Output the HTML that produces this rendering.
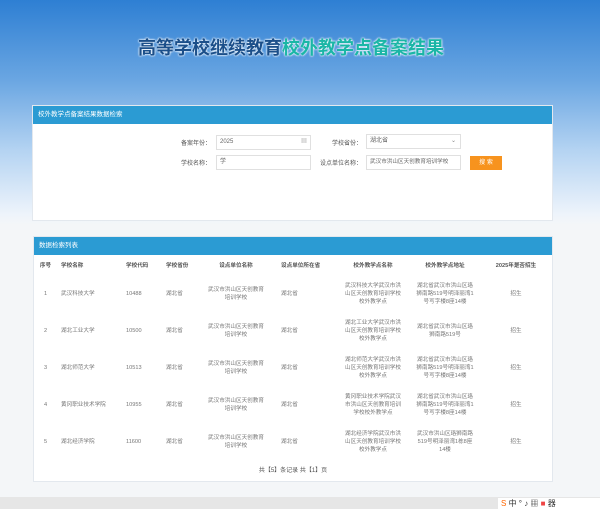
<!DOCTYPE html>
<html><head><meta charset="utf-8"><style>
*{margin:0;padding:0;box-sizing:border-box}
body{width:600px;height:509px;overflow:hidden;font-family:"Liberation Sans","Noto Sans CJK SC",sans-serif;color:#666;font-size:6px;position:relative;
background:linear-gradient(to bottom,#2e7fd3 0px,#6aa6e2 80px,#b4d3f2 150px,#eef4fb 215px,#f4f6f8 225px,#f4f6f8 100%)}
.a{position:absolute}
.title{left:138px;width:320px;top:34px;font-size:18px;font-weight:bold;color:#1b4f8a;white-space:nowrap;text-shadow:0 0 2px #fff,0 0 2px #fff}
.title span{color:#1bb6a6}
.panel{background:#fff;border:1px solid #e3e8ee}
.hd{position:absolute;left:0;right:0;top:0;height:18px;background:#2b9bd3;color:#fff;font-size:6.5px;line-height:18px;padding-left:5px}
.lbl{text-align:right;font-size:6px;color:#555;white-space:nowrap}
.inp{border:1px solid #e0e0e0;background:#fff;height:15px;line-height:13px;padding-left:3px;font-size:6px;color:#666}
.btn{background:#f7931e;color:#fff;text-align:center;line-height:14px;font-size:6px}
table{position:absolute;left:33px;top:256px;width:519px;border-collapse:collapse;table-layout:fixed}
td,th{font-size:5.6px;line-height:8px;text-align:center;color:#777;font-weight:normal;vertical-align:middle;overflow:hidden}
th{height:19px;color:#555;font-weight:bold;white-space:nowrap}
td{height:37px}
.l{text-align:left}
</style></head><body>
<div class="a title">高等学校继续教育<span>校外教学点备案结果</span></div>

<div class="a panel" style="left:32px;top:105px;width:521px;height:116px">
<div class="hd">校外教学点备案结果数据检索</div>
</div>
<div class="a lbl" style="left:160px;top:138px;width:51px">备案年份：</div>
<div class="a inp" style="left:216px;top:135px;width:95px">2025<span style="float:right;margin-right:3px;color:#aaa">▦</span></div>
<div class="a lbl" style="left:310px;top:138px;width:52px">学校省份：</div>
<div class="a inp" style="left:366px;top:134px;width:95px">湖北省<span style="float:right;margin-right:4px;color:#888">⌄</span></div>
<div class="a lbl" style="left:160px;top:158px;width:51px">学校名称：</div>
<div class="a inp" style="left:216px;top:155px;width:95px">学</div>
<div class="a lbl" style="left:300px;top:158px;width:62px">设点单位名称：</div>
<div class="a inp" style="left:366px;top:155px;width:95px;overflow:hidden;white-space:nowrap;font-size:5.6px">武汉市洪山区天创教育培训学校</div>
<div class="a btn" style="left:470px;top:156px;width:32px;height:14px">搜 索</div>

<div class="a panel" style="left:33px;top:236px;width:520px;height:246px">
<div class="hd">数据检索列表</div>
</div>
<table>
<colgroup><col style="width:25px"><col style="width:66px"><col style="width:39px"><col style="width:37px"><col style="width:72px"><col style="width:64px"><col style="width:74px"><col style="width:70px"><col></colgroup>
<tr><th>序号</th><th class="l" style="padding-left:3px">学校名称</th><th class="l" style="padding-left:2px">学校代码</th><th class="l" style="padding-left:3px">学校省份</th><th>设点单位名称</th><th class="l" style="padding-left:9px">设点单位所在省</th><th>校外教学点名称</th><th>校外教学点地址</th><th>2025年是否招生</th></tr>
<tr><td>1</td><td class="l" style="padding-left:3px">武汉科技大学</td><td class="l" style="padding-left:2px">10488</td><td class="l" style="padding-left:3px">湖北省</td><td>武汉市洪山区天创教育<br>培训学校</td><td class="l" style="padding-left:9px">湖北省</td><td>武汉科技大学武汉市洪<br>山区天创教育培训学校<br>校外教学点</td><td>湖北省武汉市洪山区珞<br>狮南路519号明泽丽湾1<br>号写字楼8座14楼</td><td>招生</td></tr>
<tr><td>2</td><td class="l" style="padding-left:3px">湖北工业大学</td><td class="l" style="padding-left:2px">10500</td><td class="l" style="padding-left:3px">湖北省</td><td>武汉市洪山区天创教育<br>培训学校</td><td class="l" style="padding-left:9px">湖北省</td><td>湖北工业大学武汉市洪<br>山区天创教育培训学校<br>校外教学点</td><td>湖北省武汉市洪山区珞<br>狮南路519号</td><td>招生</td></tr>
<tr><td>3</td><td class="l" style="padding-left:3px">湖北师范大学</td><td class="l" style="padding-left:2px">10513</td><td class="l" style="padding-left:3px">湖北省</td><td>武汉市洪山区天创教育<br>培训学校</td><td class="l" style="padding-left:9px">湖北省</td><td>湖北师范大学武汉市洪<br>山区天创教育培训学校<br>校外教学点</td><td>湖北省武汉市洪山区珞<br>狮南路519号明泽丽湾1<br>号写字楼8座14楼</td><td>招生</td></tr>
<tr><td>4</td><td class="l" style="padding-left:3px">黄冈职业技术学院</td><td class="l" style="padding-left:2px">10955</td><td class="l" style="padding-left:3px">湖北省</td><td>武汉市洪山区天创教育<br>培训学校</td><td class="l" style="padding-left:9px">湖北省</td><td>黄冈职业技术学院武汉<br>市洪山区天创教育培训<br>学校校外教学点</td><td>湖北省武汉市洪山区珞<br>狮南路519号明泽丽湾1<br>号写字楼8座14楼</td><td>招生</td></tr>
<tr><td>5</td><td class="l" style="padding-left:3px">湖北经济学院</td><td class="l" style="padding-left:2px">11600</td><td class="l" style="padding-left:3px">湖北省</td><td>武汉市洪山区天创教育<br>培训学校</td><td class="l" style="padding-left:9px">湖北省</td><td>湖北经济学院武汉市洪<br>山区天创教育培训学校<br>校外教学点</td><td>武汉市洪山区珞狮南路<br>519号明泽丽湾1栋8座<br>14楼</td><td>招生</td></tr>
</table>
<div class="a" style="left:33px;width:520px;top:465px;text-align:center;font-size:6px;color:#555">共【5】条记录 共【1】页</div>
<div class="a" style="left:0;top:497px;width:600px;height:12px;background:#e6e6e6"></div>
<div class="a" style="left:498px;top:498px;width:102px;height:11px;background:#fff;font-size:8px;color:#333;line-height:11px;padding-left:3px"><span style="color:#f60">S</span> 中 ° ♪ ▦ <span style="color:#e44">■</span> 器</div>
</body></html>
